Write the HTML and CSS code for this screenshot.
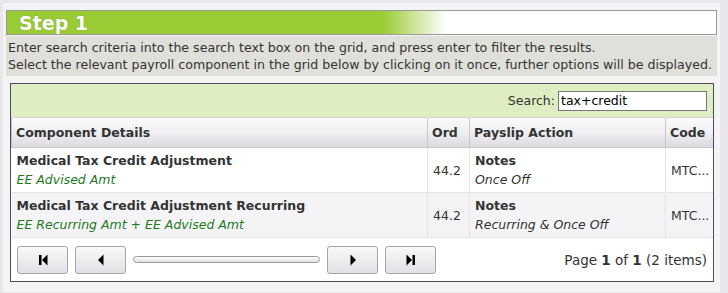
FILE: index.html
```html
<!DOCTYPE html>
<html>
<head>
    <meta name="viewport" content="width=device-width, initial-scale=1.0">
    <title>Step 1</title>
    <link rel="stylesheet" href="styles.css">
</head>
<body>
    <div class="page">
        <div class="step-header">Step 1</div>
        <div class="step-info">
            Enter search criteria into the search text box on the grid, and press enter to filter the results.<br>
            Select the relevant payroll component in the grid below by clicking on it once, further options will be displayed.
        </div>
        <div class="grid">
            <div class="grid-toolbar">
                <label for="search">Search:</label>
                <input id="search" type="text" value="tax+credit">
            </div>
            <table>
                <colgroup>
                    <col class="col-details">
                    <col class="col-ord">
                    <col class="col-action">
                    <col class="col-code">
                </colgroup>
                <thead>
                    <tr>
                        <th>Component Details</th>
                        <th>Ord</th>
                        <th>Payslip Action</th>
                        <th>Code</th>
                    </tr>
                </thead>
                <tbody>
                    <tr>
                        <td><b>Medical Tax Credit Adjustment</b><i class="sub">EE Advised Amt</i></td>
                        <td>44.2</td>
                        <td><b>Notes</b><i>Once Off</i></td>
                        <td class="code">MTC...</td>
                    </tr>
                    <tr class="alt">
                        <td><b>Medical Tax Credit Adjustment Recurring</b><i class="sub">EE Recurring Amt + EE Advised Amt</i></td>
                        <td>44.2</td>
                        <td><b>Notes</b><i>Recurring &amp; Once Off</i></td>
                        <td class="code">MTC...</td>
                    </tr>
                </tbody>
            </table>
            <div class="pager">
                <button class="pg-btn" title="First"><svg width="12" height="12" viewBox="0 0 12 12"><rect x="2" y="1" width="2.5" height="10" fill="#000"/><polygon points="10.5,0.5 10.5,11.5 5,6" fill="#000"/></svg></button>
                <button class="pg-btn" title="Previous"><svg width="12" height="12" viewBox="0 0 12 12"><polygon points="8.5,0.5 8.5,11.5 3,6" fill="#000"/></svg></button>
                <div class="pg-slider"></div>
                <button class="pg-btn" title="Next"><svg width="12" height="12" viewBox="0 0 12 12"><polygon points="3.5,0.5 3.5,11.5 9,6" fill="#000"/></svg></button>
                <button class="pg-btn" title="Last"><svg width="12" height="12" viewBox="0 0 12 12"><polygon points="1.5,0.5 1.5,11.5 7,6" fill="#000"/><rect x="7.5" y="1" width="2.5" height="10" fill="#000"/></svg></button>
                <div class="pg-info">Page <b>1</b> of <b>1</b> (2 items)</div>
            </div>
        </div>
    </div>
</body>
</html>
```

FILE: styles.css
```css
body {
    margin: 0;
    background: #e9e7eb;
    font-family: 'DejaVu Sans', Verdana, sans-serif;
    font-size: 12.5px;
    color: #333;
}
.page {
    margin: 3px 8px 0 3px;
    background: #f4f4f4;
    padding: 7px 3px 10px 3px;
    min-height: 280px;
    box-sizing: border-box;
}
.step-header {
    height: 23px;
    border: 1px solid #999;
    background: linear-gradient(to right, #9acb34 0%, #9acb34 53%, #ffffff 62%, #ffffff 100%);
    color: #fff;
    font-size: 19px;
    font-weight: bold;
    line-height: 24px;
    padding-left: 12px;
    text-shadow: 0 0 1px #6a8a20;
}
.step-info {
    background: #e0e0db;
    padding: 3px 2px;
    line-height: 17px;
    margin-top: 1px;
    font-size: 12.6px;
    white-space: nowrap;
    overflow: hidden;
}
.grid {
    margin: 7px 3px 0 4px;
    border: 1px solid #4b4a66;
    background: #fff;
}
.grid-toolbar {
    background: #dfedc3;
    height: 33px;
    display: flex;
    align-items: center;
    justify-content: flex-end;
    gap: 3px;
    padding-right: 6px;
    border-bottom: 1px solid #d6d6d6;
}
.grid-toolbar input {
    width: 143px;
    height: 16px;
    border: 1px solid #777;
    padding: 1px 2px;
    font-family: 'DejaVu Sans', Verdana, sans-serif;
    font-size: 12.5px;
    color: #000;
    outline: 0;
}
table {
    width: 100%;
    border-collapse: collapse;
    table-layout: fixed;
}
.col-details { width: 416px; }
.col-ord { width: 42px; }
.col-action { width: 196px; }
th {
    height: 29px;
    padding: 0 4px;
    text-align: left;
    font-weight: bold;
    color: #333;
    background: linear-gradient(#fafafb, #f0f0f2 45%, #dcdbe0);
    border-left: 1px solid #c9c9cc;
    border-bottom: 1px solid #c8c8cc;
    white-space: nowrap;
    overflow: hidden;
}
th:first-child {
    border-left: 1px solid #c0c0c0;
}
td {
    height: 44px;
    padding: 0 5px;
    border-left: 1px solid #e4e4e4;
    border-bottom: 1px solid #e4e4e4;
    vertical-align: middle;
    white-space: nowrap;
    overflow: hidden;
}
td:first-child {
    border-left: 0;
}
td b, td i {
    display: block;
    line-height: 19px;
}
td i.sub {
    color: #1d7a1d;
}
tr.alt td {
    background: #f4f4f6;
}
.pager {
    display: flex;
    align-items: center;
    height: 43px;
    padding: 0 6px;
    gap: 7px;
}
.pg-btn {
    width: 51px;
    height: 28px;
    border: 1px solid #a6a6aa;
    border-radius: 3px;
    background: linear-gradient(#f8f8fa, #e2e2e6);
    display: flex;
    align-items: center;
    justify-content: center;
    padding: 0;
    cursor: pointer;
}
.pg-slider {
    width: 185px;
    height: 5px;
    border: 1px solid #9a9aa0;
    border-radius: 4px;
    background: linear-gradient(#ffffff, #e0e0e4);
}
.pg-info {
    margin-left: auto;
    font-size: 13.5px;
    color: #333;
}
```
